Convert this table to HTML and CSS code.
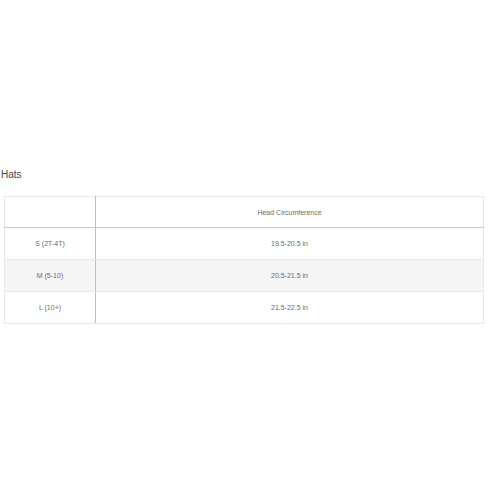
FILE: index.html
```html
<!DOCTYPE html>
<html>
<head>
<meta charset="utf-8">
<link rel="stylesheet" href="styles.css">
</head>
<body>
<div class="page">
  <div class="title">Hats</div>
  <table class="chart">
    <thead>
      <tr><th class="first"></th><th>Head Circumference</th></tr>
    </thead>
    <tbody>
      <tr><td class="first">S (2T-4T)</td><td>19.5-20.5 in</td></tr>
      <tr class="alt"><td class="first">M (5-10)</td><td>20.5-21.5 in</td></tr>
      <tr><td class="first">L (10+)</td><td>21.5-22.5 in</td></tr>
    </tbody>
  </table>
</div>
</body>
</html>
```
FILE: styles.css
```css
html, body { margin: 0; padding: 0; background: #fff; }
body { font-family: "Liberation Sans", Arial, sans-serif; color: #555; }
.page { padding: 169px 5px 0 4px; }
.title { font-size: 10px; color: #444; margin-left: -3px; line-height: 12px; height: 12px; margin-bottom: 15px; }
.chart { width: 480px; border-collapse: collapse; font-size: 7px; color: #6a6a6a; }
.chart th, .chart td { height: 31px; padding: 0; text-align: center; font-weight: normal; border: 1px solid #e8e8e8; }
.chart thead th { height: 30px; border-bottom: 1px solid #c8c8c8; }
.chart .first { width: 90px; border-right: 1px solid #bdbdbd; }
.chart .alt td { background: #f5f5f5; }
```
